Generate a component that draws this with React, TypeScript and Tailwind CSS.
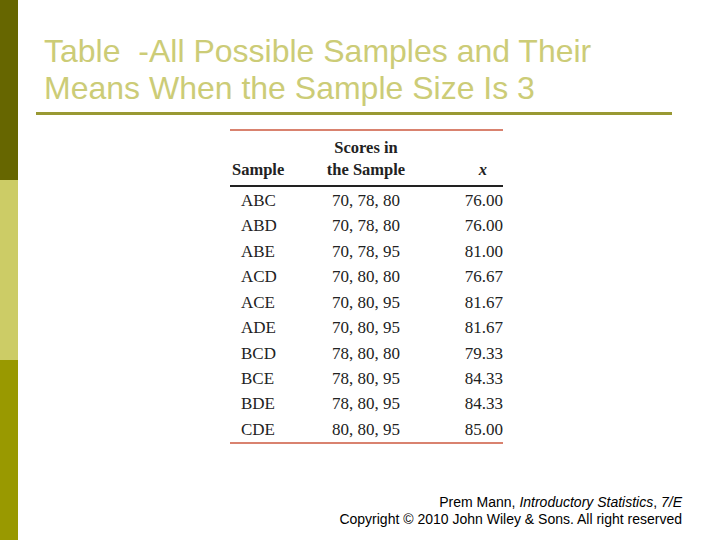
import React from "react";

const rows: [string, string, string][] = [
  ["ABC", "70, 78, 80", "76.00"],
  ["ABD", "70, 78, 80", "76.00"],
  ["ABE", "70, 78, 95", "81.00"],
  ["ACD", "70, 80, 80", "76.67"],
  ["ACE", "70, 80, 95", "81.67"],
  ["ADE", "70, 80, 95", "81.67"],
  ["BCD", "78, 80, 80", "79.33"],
  ["BCE", "78, 80, 95", "84.33"],
  ["BDE", "78, 80, 95", "84.33"],
  ["CDE", "80, 80, 95", "85.00"],
];

export default function App() {
  return (
    <div className="flex h-[540px] w-[720px] overflow-hidden bg-white">
      {/* left accent bar */}
      <div className="flex w-[18px] shrink-0 flex-col">
        <div className="h-[180px] bg-[#666600]" />
        <div className="h-[180px] bg-[#cccc66]" />
        <div className="flex-1 bg-[#999900]" />
      </div>

      <div className="flex flex-1 flex-col">
        <div className="h-[112px] pl-[26px] pt-[33px] font-['Liberation_Sans',Arial,sans-serif] text-[32px] leading-[37px] text-[#cccc77]">
          <div>Table&nbsp; -All Possible Samples and Their</div>
          <div>Means When the Sample Size Is 3</div>
        </div>
        <div className="ml-[18px] h-[3px] w-[636px] bg-[#999933]" />

        {/* table */}
        <div className="ml-[212px] mt-[14px] w-[273px] font-['Liberation_Serif','Times_New_Roman',serif] text-[17px] text-[#222]">
          <div className="h-[2px] bg-[#d9826f]" />
          <div className="flex items-end pt-[6px] pb-[4px] text-[16.5px] font-bold leading-[22px]">
            <div className="w-[90px] pl-[2px]">Sample</div>
            <div className="w-[92px] text-center">
              Scores in
              <br />
              the Sample
            </div>
            <div className="w-[91px] pr-[16px] text-right italic">x</div>
          </div>
          <div className="h-[2px] bg-[#222]" />
          <div className="pt-[1px]">
            {rows.map(([s, sc, m]) => (
              <div key={s} className="flex h-[25.45px] items-center">
                <div className="w-[90px] pl-[11px]">{s}</div>
                <div className="w-[92px] whitespace-nowrap text-center">{sc}</div>
                <div className="w-[91px] text-right">{m}</div>
              </div>
            ))}
          </div>
          <div className="h-[2px] bg-[#d9826f]" />
        </div>

        <div className="mt-auto mb-[12px] mr-[38px] text-right font-['Liberation_Sans',Arial,sans-serif] text-[14px] leading-[17px] text-black">
          <div>
            Prem Mann, <span className="italic">Introductory Statistics</span>, <span className="italic">7/E</span>
          </div>
          <div>Copyright © 2010 John Wiley &amp; Sons. All right reserved</div>
        </div>
      </div>
    </div>
  );
}
